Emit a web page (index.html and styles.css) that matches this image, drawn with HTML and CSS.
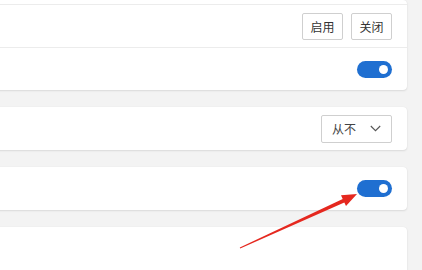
FILE: index.html
```html
<!DOCTYPE html>
<html lang="zh-CN">
<head>
    <meta charset="UTF-8">
    <meta name="viewport" content="width=device-width, initial-scale=1.0">
    <title>设置</title>
    <link rel="stylesheet" href="styles.css">
</head>
<body>
    <div class="page">
        <div class="card">
            <div class="row row-cut"></div>
            <div class="row">
                <div class="actions">
                    <button class="btn">启用</button>
                    <button class="btn">关闭</button>
                </div>
            </div>
            <div class="row">
                <span class="toggle on"><span class="knob"></span></span>
            </div>
        </div>
        <div class="card">
            <div class="row">
                <div class="select">
                    <span>从不</span>
                    <svg class="chevron" width="11" height="7" viewBox="0 0 11 7"><path d="M0.8 1 L5.5 5.7 L10.2 1" fill="none" stroke="#555" stroke-width="1.1"/></svg>
                </div>
            </div>
        </div>
        <div class="card">
            <div class="row">
                <span class="toggle on"><span class="knob"></span></span>
            </div>
        </div>
        <div class="card card-last">
            <div class="row"></div>
        </div>
    </div>
    <svg class="arrow" width="422" height="270" viewBox="0 0 422 270">
        <path d="M239.8 247.6 L342.7 198.9 L341 195.3 L357 194 L346 206.1 L344.3 202.5 L240.2 248.4 Z" fill="#e5281f"/>
    </svg>
</body>
</html>
```

FILE: styles.css
```css
body {
    margin: 0;
    background: #f3f3f3;
    font-family: "Noto Sans CJK SC", "Noto Sans", sans-serif;
    color: #333;
    overflow: hidden;
}
.page {
    margin-left: -20px;
    margin-right: 15px;
    display: flex;
    flex-direction: column;
    gap: 17px;
}
.card {
    background: #fff;
    border-radius: 4px;
    box-shadow: 0 1px 2px rgba(0,0,0,0.10), 0 0 1px rgba(0,0,0,0.08);
}
.row {
    height: 42px;
    display: flex;
    align-items: center;
    justify-content: flex-end;
    padding-right: 15px;
    border-top: 1px solid #ececec;
}
.card > .row:first-child {
    border-top: none;
    height: 43px;
}
.card > .row.row-cut {
    height: 4px;
}
.actions {
    display: flex;
    gap: 8px;
}
.btn {
    width: 41px;
    height: 27px;
    background: #fff;
    border: 1px solid #cfcfcf;
    border-radius: 2px;
    font-family: inherit;
    font-size: 12px;
    color: #333;
    padding: 0;
}
.toggle {
    width: 35px;
    height: 17px;
    border-radius: 9px;
    background: #1f6fd1;
    display: flex;
    align-items: center;
    justify-content: flex-end;
    padding-right: 4px;
    box-sizing: border-box;
}
.knob {
    width: 9px;
    height: 9px;
    border-radius: 50%;
    background: #fff;
}
.select {
    width: 71px;
    height: 28px;
    box-sizing: border-box;
    border: 1px solid #cfcfcf;
    border-radius: 2px;
    display: flex;
    align-items: center;
    gap: 14px;
    padding-left: 10px;
    font-size: 12px;
    color: #444;
}
.card-last {
    height: 60px;
}
.arrow {
    position: absolute;
    left: 0;
    top: 0;
    pointer-events: none;
}
```
